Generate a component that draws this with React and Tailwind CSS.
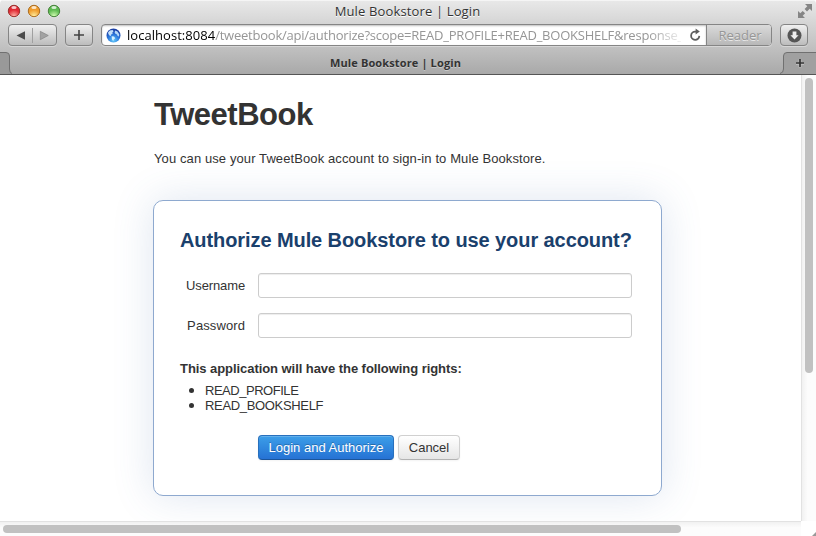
import React from "react";

const toolButton =
  "flex h-[22px] items-center justify-center rounded-[4px] border border-[#858585] bg-linear-to-b from-[#f0f0f0] to-[#bcbcbc] shadow-[0_1px_0_rgba(255,255,255,0.35)]";

function TrafficLight({ id, edge, dark, light }) {
  return (
    <svg width="14" height="14" viewBox="0 0 14 14">
      <defs>
        <radialGradient id={id} cx="0.5" cy="0.95" r="0.75">
          <stop offset="0" stopColor={light} />
          <stop offset="0.75" stopColor={dark} />
        </radialGradient>
      </defs>
      <circle cx="7" cy="7.6" r="6" fill="#fff" opacity="0.5" />
      <circle cx="7" cy="7" r="5.7" fill={`url(#${id})`} stroke={edge} strokeWidth="1" />
      <ellipse cx="7" cy="3.6" rx="2.6" ry="1.5" fill="#fff" opacity="0.75" />
    </svg>
  );
}

function Globe() {
  return (
    <svg width="15" height="15" viewBox="0 0 15 15" className="shrink-0">
      <defs>
        <radialGradient id="globe" cx="0.5" cy="0.85" r="0.75">
          <stop offset="0" stopColor="#62c8fa" />
          <stop offset="0.55" stopColor="#2c78dc" />
          <stop offset="1" stopColor="#1b3fa4" />
        </radialGradient>
      </defs>
      <circle cx="7.5" cy="7.5" r="7" fill="url(#globe)" />
      <path d="M2 4.4 3.8 2.6 6.6 2 7.6 3.2 6.4 4.2 6.8 5.4 5.2 6.4 4.8 8 3.4 7.4 2.4 6Z" fill="#c3dffa" />
      <path d="M9.2 2.6 11.4 3.4 13.2 6.2 13 8.6 11.6 8 11 6.4 9.4 5.8 8.6 4.4Z" fill="#b5d9f8" />
      <path d="M5.6 8.2 8 8.6 9.2 10.2 7.8 11.6 7.2 13 6 11.6Z" fill="#d5f1fd" />
    </svg>
  );
}

function WindowChrome() {
  return (
    <header className="flex h-[75px] flex-col bg-linear-to-b from-[#e9e9e9] via-[#c6c6c6] via-55% to-[#a8a8a8] font-['Open_Sans','Noto_Sans',sans-serif] text-[#333]">
      <div className="grid h-[24px] grid-cols-[60px_1fr_60px] border-t border-[#f5f5f5] pl-[7px] pr-px">
        <div className="flex gap-[6px] pt-[3px]">
          <TrafficLight id="red" edge="#98302c" dark="#e02a34" light="#ffb5a8" />
          <TrafficLight id="amber" edge="#a96c20" dark="#f09c2c" light="#fff0a0" />
          <TrafficLight id="green" edge="#46813b" dark="#5dba50" light="#d5ffb4" />
        </div>
        <div className="pr-[7px] text-center text-[13px] leading-[20px] tracking-[0.14px] whitespace-nowrap [text-shadow:0_1px_0_#fff]">
          Mule Bookstore | Login
        </div>
        <div className="flex justify-end pt-[2px] pr-[2px]">
          <svg width="16" height="16" viewBox="0 0 16 16" fill="#858585">
            <path d="M8 1H15V8L12.7 5.7 10 8.4 7.6 6 10.3 3.3Z" />
            <path d="M1 8 3.3 10.3 5.7 7.9 8.1 10.3 5.7 12.7 8 15H1Z" />
          </svg>
        </div>
      </div>

      <div className="flex h-[28px] shrink-0 items-start pl-[8px] pr-[8px]">
        <div className={`${toolButton} w-[49px]`}>
          <svg width="47" height="20" viewBox="0 0 47 20">
            <path d="M7.5 10.5 16 6.2v8.6Z" fill="#4b4b4b" />
            <path d="M23.5 3v15" stroke="#a0a0a0" />
            <path d="M39.3 10.5 31.3 6.3v8.4Z" fill="#a2a2a2" stroke="#7d7d7d" strokeWidth="0.6" />
          </svg>
        </div>
        <div className={`${toolButton} ml-[8px] w-[28px]`}>
          <svg width="12" height="12" viewBox="0 0 12 12">
            <path d="M6 1v10M1 6h10" stroke="#444" strokeWidth="1.6" />
          </svg>
        </div>
        <div className="ml-[8px] flex h-[22px] w-[671px] overflow-hidden rounded-[4px] border border-[#858585] bg-white shadow-[0_1px_0_rgba(255,255,255,0.35)]">
          <div className="flex min-w-0 flex-1 items-center pl-[4px] shadow-[inset_0_1px_2px_rgba(0,0,0,0.25)]">
            <Globe />
            <div className="ml-[6px] w-[554px] text-[13px] leading-[20px] whitespace-nowrap text-[#969696] mask-r-from-94% mask-r-to-101%">
              <span className="tracking-[0.04px] text-black">localhost:8084</span>
              <span className="tracking-[-0.23px]">/tweetbook/api/authorize?scope=READ_PROFILE+READ_BOOKSHELF&amp;response_</span>
            </div>
            <svg className="ml-[8px] shrink-0" width="13" height="14" viewBox="0 0 13 14">
              <path d="M10.3 7.9A4.1 4.1 0 1 1 6.4 3.6H8" fill="none" stroke="#5f5f5f" strokeWidth="1.8" />
              <path d="M6.6 .6 10.8 3.6 6.6 6.6Z" fill="#5f5f5f" />
            </svg>
          </div>
          <div className="flex w-[65px] shrink-0 items-center justify-center border-l border-[#858585] bg-linear-to-b from-[#dadada] to-[#b8b8b8] pl-[2px] text-[13px] leading-[20px] text-[#969696] [text-shadow:0_1px_0_#e8e8e8]">
            Reader
          </div>
        </div>
        <div className={`${toolButton} ml-[8px] w-[28px]`}>
          <svg width="15" height="15" viewBox="0 0 15 15">
            <circle cx="7.5" cy="7.5" r="7" fill="#555" />
            <path d="M5.6 3.4h3.8v3.8h2.2L7.5 11.6 3.4 7.2h2.2Z" fill="#eee" />
          </svg>
        </div>
      </div>

      <div className="grid h-[23px] grid-cols-[12px_1fr_38px] border-b border-[#555]">
        <svg width="12" height="22" viewBox="0 0 12 22">
          <path d="M0 .5H6Q9.5.5 9.5 4V17Q9.5 21 12 22H0Z" fill="#999" />
          <path d="M0 .5H6Q9.5.5 9.5 4V17Q9.5 21 12 21.5" fill="none" stroke="#707070" />
        </svg>
        <div className="pl-px text-center text-[11px] leading-[22px] font-bold tracking-[0.13px] whitespace-nowrap [text-shadow:0_1px_0_#c8c8c8]">
          Mule Bookstore | Login
        </div>
        <svg width="38" height="22" viewBox="0 0 38 22">
          <path d="M38 .5H9Q5.5.5 5.5 4V17Q5.5 21 2 22H38Z" fill="#a0a0a0" />
          <path d="M38 .5H9Q5.5.5 5.5 4V17Q5.5 21 2 21.5" fill="none" stroke="#707070" />
          <path d="M22 7.5v8M18 11.5h8" stroke="#ddd" strokeWidth="3" opacity=".45" />
          <path d="M22 7v8M18 11h8" stroke="#333" strokeWidth="1.7" />
        </svg>
      </div>
    </header>
  );
}

function Field({ label, type, spacing }) {
  return (
    <label className="flex h-[25px] items-center">
      <span className={`w-[65px] text-right ${spacing}`}>{label}</span>
      <input
        type={type}
        className="ml-[13px] h-[25px] w-[374px] rounded-[3px] border border-[#ccc] bg-white px-1 shadow-[inset_0_1px_1px_rgba(0,0,0,0.075)] outline-none"
      />
    </label>
  );
}

const rights = [
  { name: "READ_PROFILE", spacing: "tracking-[-0.47px]" },
  { name: "READ_BOOKSHELF", spacing: "tracking-[-0.33px]" },
];

function LoginPage() {
  return (
    <main className="min-w-0 overflow-hidden bg-white pl-[153px] text-[13px] leading-[18px] text-[#333]">
      <h1 className="mt-[22px] pl-px text-[31px] leading-[36px] font-bold tracking-[-0.48px]">TweetBook</h1>
      <p className="mt-[17px] pl-px tracking-[0.1px] whitespace-nowrap">You can use your TweetBook account to sign-in to Mule Bookstore.</p>
      <section className="mt-[32px] h-[296px] w-[509px] rounded-[10px] border border-[#8ea9cf] bg-white pt-[21px] pl-[26px] shadow-[0_0_40px_rgba(70,110,170,0.18)]">
        <h2 className="text-[20px] leading-[36px] font-bold tracking-[-0.085px] whitespace-nowrap text-[#1a406c]">
          Authorize Mule Bookstore to use your account?
        </h2>
        <form className="mt-[15px]">
          <div className="flex flex-col gap-[15px]">
            <Field label="Username" type="text" spacing="tracking-[-0.13px]" />
            <Field label="Password" type="password" spacing="tracking-[0.1px]" />
          </div>
          <p className="mt-[22px] font-bold tracking-[-0.06px] whitespace-nowrap">This application will have the following rights:</p>
          <ul className="mt-[5px] leading-[15px]">
            {rights.map((right) => (
              <li key={right.name} className="flex items-center">
                <span className="mr-[11px] ml-[9px] h-[5px] w-[5px] rounded-full bg-[#333]" />
                <span className={right.spacing}>{right.name}</span>
              </li>
            ))}
          </ul>
          <div className="mt-[22px] flex gap-[4px] pl-[78px]">
            <button type="button" className="h-[25px] w-[136px] rounded-[4px] border border-[#2870bd] border-b-[#1b559b] bg-linear-to-b from-[#3c9ee8] to-[#2672d4] whitespace-nowrap text-white shadow-[inset_0_1px_0_rgba(255,255,255,0.2),0_1px_2px_rgba(0,0,0,0.05)] [text-shadow:0_-1px_0_rgba(0,0,0,0.25)]">
              Login and Authorize
            </button>
            <button type="button" className="h-[25px] w-[62px] rounded-[4px] border border-[#d0d0d0] border-b-[#b3b3b3] bg-linear-to-b from-white to-[#e6e6e6] shadow-[0_1px_2px_rgba(0,0,0,0.05)]">
              Cancel
            </button>
          </div>
        </form>
      </section>
    </main>
  );
}

export default function App() {
  return (
    <div className="flex h-[536px] w-[816px] flex-col overflow-hidden rounded-t-[4px] bg-white font-['Liberation_Sans',Arial,sans-serif]">
      <WindowChrome />
      <div className="grid h-[461px] grid-cols-[801px_15px] grid-rows-[446px_15px]">
        <LoginPage />
        <div className="border-l border-[#e2e2e2] bg-linear-to-r from-[#f1f1f1] to-[#fcfcfc] to-40% pt-[3px] pl-[3px]">
          <div className="h-[295px] w-[8px] rounded-full bg-[#c1c1c1]" />
        </div>
        <div className="border-t border-[#e2e2e2] bg-linear-to-b from-[#f1f1f1] to-[#fcfcfc] to-40% pt-[3px] pl-[3px]">
          <div className="h-[8px] w-[678px] rounded-full bg-[#c1c1c1]" />
        </div>
        <div className="flex items-end justify-end bg-white">
          <svg width="4" height="4" viewBox="0 0 4 4">
            <path d="M0 4 4 0V4Z" fill="#999" />
          </svg>
        </div>
      </div>
    </div>
  );
}
